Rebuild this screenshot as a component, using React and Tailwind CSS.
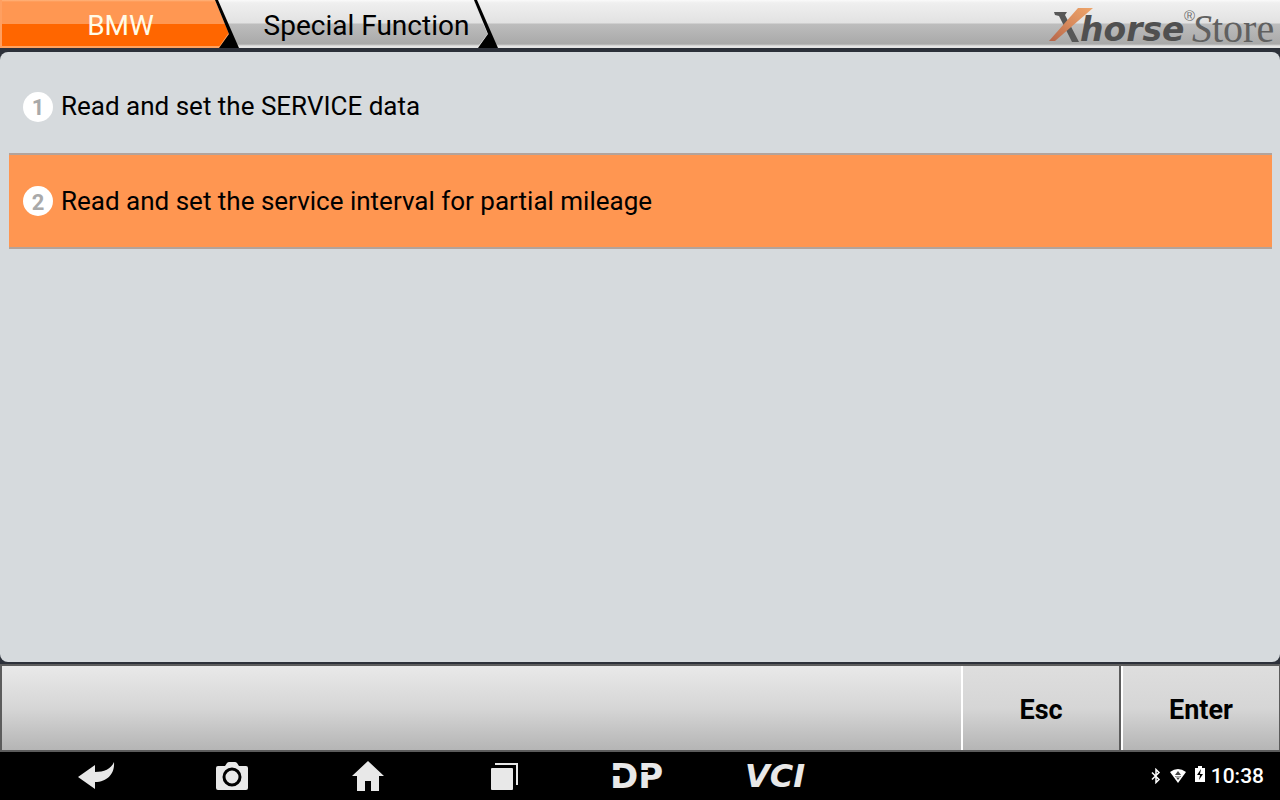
import { useState } from 'react';

const MENU_ITEMS = [
  'Read and set the SERVICE data',
  'Read and set the service interval for partial mileage',
];

const TabDivider = ({ active }) => (
  <svg width="24" height="48" viewBox="0 0 24 48" className="shrink-0" aria-hidden="true">
    {active && (
      <>
        <path d="M0 0L10 24H0Z" fill="#ff9752" />
        <path d="M0 24H10L14 34L4 48H0Z" fill="#ff6600" />
        <path d="M0 47H5L14 34" fill="none" stroke="#ffa25f" strokeWidth="2" />
        <path d="M0 1H1" stroke="#ffb47c" strokeWidth="2" />
      </>
    )}
    {!active && <path d="M0 1L14 34L4 47H0" fill="none" stroke="#e2e2e2" strokeWidth="1" />}
    <path d="M0 0H3L24 48H4L14 34Z" fill="#000" />
  </svg>
);

const StoreLogo = () => (
  <svg width="232" height="56" viewBox="0 -4 232 56" className="shrink-0" role="img" aria-label="Xhorse Store">
    <defs>
      <linearGradient id="slash" x1="1" y1="0" x2="0" y2="1">
        <stop offset="0" stopColor="#eea56a" />
        <stop offset="0.5" stopColor="#d88a5c" />
        <stop offset="1" stopColor="#b5654a" />
      </linearGradient>
    </defs>
    <path d="M6 12H19L17 15L31 42H24L11 16L7 15Z" fill="#575757" />
    <path d="M30 8H45L7 41H1Z" fill="url(#slash)" />
    <text x="32" y="41" fontSize="33" fill="#505050" className="font-['DejaVu_Sans',sans-serif] font-bold italic">horse</text>
    <text x="136" y="21" fontSize="15" fill="#707070" className="font-['Liberation_Sans',sans-serif]">®</text>
    <text x="144" y="42" fontSize="40" fill="#606060" className="font-['Liberation_Serif',serif]">
      <tspan className="italic">S</tspan>tore
    </text>
  </svg>
);

const Header = () => (
  <header className="h-12 shrink-0 flex items-center justify-between bg-[linear-gradient(to_bottom,#fafafa_0px,#efefef_3px,#e2e2e2_23px,#bdbdbd_24px,#a9a9a9_44px,#e4e4e4_46px,#e4e4e4_48px)]">
    <nav className="flex h-full text-[28px]">
      <button className="w-[215px] pl-6 pt-1 text-[#fffbe8] border-l-2 border-[#ff9f60] bg-[linear-gradient(to_bottom,#ffb47c_0px,#ff9752_2px,#ff9752_24px,#ff6600_24px,#ff6600_46px,#ffa25f_46px)]">
        BMW
      </button>
      <TabDivider active />
      <button className="w-[235px] pl-5 pt-1 whitespace-nowrap">Special Function</button>
      <TabDivider />
    </nav>
    <StoreLogo />
  </header>
);

const MenuList = ({ selected, onSelect }) => (
  <main className="flex-1 min-h-0 mt-1 rounded-lg bg-[#d6dadd] pl-[9px] pr-2 pt-2">
    <ul>
      {MENU_ITEMS.map((item, idx) => (
        <li key={item}>
          <button
            onClick={() => onSelect(idx)}
            className={`w-full flex items-center gap-2 px-3.5 text-left text-[26px] ${
              selected === idx ? 'h-24 bg-[#ff9651] border-t-2 border-b-2 border-[#b3a39b]' : 'h-[93px]'
            }`}
          >
            <span className="size-[30px] pt-0.5 shrink-0 rounded-full bg-white flex items-center justify-center text-[22px] font-bold text-[#a9a9a9]">
              {idx + 1}
            </span>
            <span>{item}</span>
          </button>
        </li>
      ))}
    </ul>
  </main>
);

const ActionBar = () => (
  <div className="h-[88px] mt-0.5 shrink-0 flex border-2 border-r border-[#5c5c5c] text-[27px] font-bold">
    <div className="flex-1 bg-linear-to-b from-[#e9e9e9] via-[#d6d6d6] to-[#b5b5b5]" />
    <button className="w-40 pt-1 border-l-2 border-l-white border-r-2 border-r-[#5c5c5c] bg-linear-to-b from-[#dedede] via-[#d6d6d6] to-[#b5b5b5]">
      Esc
    </button>
    <button className="w-[158px] pt-1 border-l-2 border-white bg-linear-to-b from-[#dedede] via-[#d6d6d6] to-[#b5b5b5]">
      Enter
    </button>
  </div>
);

const NavButton = ({ label, children }) => (
  <button aria-label={label} className="w-[136px] h-full flex items-center justify-center">
    {children}
  </button>
);

const SystemBar = () => (
  <footer className="h-12 shrink-0 flex items-center justify-between bg-black text-[#e8e8e8] pl-7 pr-4">
    <div className="flex h-full">
      <NavButton label="Back">
        <svg width="38" height="28" viewBox="0 0 38 28" fill="currentColor">
          <path d="M1 15L18 3V10C27 10 34 7 37 0C38 12 30 20 18 20V27Z" />
        </svg>
      </NavButton>
      <NavButton label="Screenshot">
        <svg width="32" height="28" viewBox="0 0 32 28" fill="currentColor">
          <path d="M2 4H9L11 1Q12 0 13 0H19Q20 0 21 1L23 4H30Q32 4 32 6V26Q32 28 30 28H2Q0 28 0 26V6Q0 4 2 4Z" />
          <circle cx="16" cy="15" r="8" stroke="#000" strokeWidth="3" />
        </svg>
      </NavButton>
      <NavButton label="Home">
        <svg width="32" height="30" viewBox="0 0 32 30" fill="currentColor">
          <path d="M16 0L32 15H27V30H19V20H13V30H5V15H0Z" />
        </svg>
      </NavButton>
      <NavButton label="Recent apps">
        <svg width="27" height="27" viewBox="0 0 27 27" fill="currentColor">
          <rect y="5" width="22" height="22" rx="1" />
          <path d="M4 0H27V22H25V2H4Z" />
        </svg>
      </NavButton>
      <NavButton label="DP">
        <svg width="60" height="48" viewBox="0 0 60 48" fill="currentColor">
          <text x="0" y="36" fontSize="34" className="font-['DejaVu_Sans',sans-serif] font-bold">DP</text>
          <path d="M0 18H11V24H0ZM28 18H38V20H28Z" fill="#000" />
        </svg>
      </NavButton>
      <NavButton label="VCI">
        <svg width="62" height="48" viewBox="0 0 62 48" fill="currentColor">
          <text x="0" y="35" fontSize="32" className="font-['DejaVu_Sans',sans-serif] font-bold italic">VCI</text>
        </svg>
      </NavButton>
    </div>
    <div className="flex items-center text-white">
      <svg width="10" height="16" viewBox="0 0 10 16" fill="none" stroke="currentColor" strokeWidth="1.500" aria-hidden="true">
        <path d="M1 4.500L8 11.500L5 14.500V1.500L8 4.500L1 11.500" />
      </svg>
      <svg width="18" height="16" viewBox="0 0 18 16" className="ml-2" aria-hidden="true">
        <path d="M1 4Q9 -2 17 4L9 15Z" fill="#fff" />
        <path d="M9 3L12 7H6ZM6 8H12L9 12Z" fill="#444" />
        <path d="M7 9H11" stroke="#fff" />
      </svg>
      <svg width="10" height="16" viewBox="0 0 10 16" className="ml-2 -mt-1" aria-hidden="true">
        <path d="M0 2H3V0H7V2H10V16H0Z" fill="#fff" />
        <path d="M6 3L2 9H5L4 14L8 8H5Z" fill="#000" />
      </svg>
      <span className="ml-1.5 pt-0.5 text-[21px] font-medium">10:38</span>
    </div>
  </footer>
);

const App = () => {
  const [selected, setSelected] = useState(1);

  return (
    <div className="h-screen flex flex-col bg-[#2c3039] font-[Roboto,sans-serif] text-black overflow-hidden">
      <Header />
      <MenuList selected={selected} onSelect={setSelected} />
      <ActionBar />
      <SystemBar />
    </div>
  );
};

export default App;
